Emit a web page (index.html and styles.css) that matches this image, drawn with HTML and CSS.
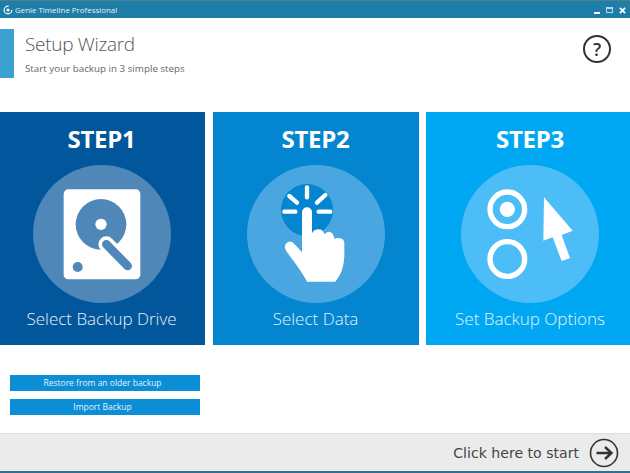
FILE: index.html
```html
<!DOCTYPE html>
<html>
<head>
    <meta charset="UTF-8">
    <title>Genie Timeline Professional</title>
    <link rel="stylesheet" href="styles.css">
</head>
<body>
    <div class="window">
        <div class="titlebar">
            <svg class="app-icon" viewBox="0 0 12 12">
                <circle cx="6" cy="6" r="4.6" fill="none" stroke="#fff" stroke-width="1.4" stroke-dasharray="22 6"/>
                <circle cx="6" cy="6" r="1.8" fill="#fff"/>
            </svg>
            <span class="app-name">Genie Timeline Professional</span>
            <div class="win-buttons">
                <span class="win-min"></span>
                <span class="win-max"></span>
                <svg class="win-close" viewBox="0 0 8 8"><path d="M1 1L7 7M7 1L1 7" stroke="#fff" stroke-width="2"/></svg>
            </div>
        </div>

        <header class="head">
            <div class="accent"></div>
            <div class="head-text">
                <h1>Setup Wizard</h1>
                <p>Start your backup in 3 simple steps</p>
            </div>
            <div class="help">?</div>
        </header>

        <div class="steps">
            <div class="step step1">
                <h2>STEP1</h2>
                <svg class="step-icon" viewBox="0 0 414 414">
                    <circle cx="207" cy="207" r="207" fill="#4f87b8"/>
                    <rect x="92" y="73" width="230" height="270" rx="14" fill="#fff"/>
                    <circle cx="204" cy="178" r="76" fill="#4f87b8"/>
                    <circle cx="204" cy="178" r="17" fill="#fff"/>
                    <circle cx="134" cy="306" r="15" fill="#4f87b8"/>
                    <path d="M220 238L284 303" stroke="#fff" stroke-width="48" stroke-linecap="round"/>
                    <path d="M220 238L284 303" stroke="#4f87b8" stroke-width="26" stroke-linecap="round"/>
                </svg>
                <div class="step-label">Select Backup Drive</div>
            </div>
            <div class="step step2">
                <h2>STEP2</h2>
                <svg class="step-icon" viewBox="0 0 414 414">
                    <circle cx="207" cy="207" r="207" fill="#4aa6e0"/>
                    <circle cx="180" cy="135" r="78" fill="#0385d0"/>
                    <path d="M180 67V97M127 93L150 113M235 90L210 113M112 140H145M215 140H250" stroke="#fff" stroke-width="13" stroke-linecap="round"/>
                    <path d="M165 142A15 15 0 0 1 195 142V205Q200 193 215 193Q228 193 232 208Q238 200 246 200Q258 200 263 222Q268 218 278 220Q292 222 292 235V275Q290 320 265 350H180Q165 320 120 262Q108 245 118 235Q130 222 145 240L165 262Z" fill="#fff"/>
                </svg>
                <div class="step-label">Select Data</div>
            </div>
            <div class="step step3">
                <h2>STEP3</h2>
                <svg class="step-icon" viewBox="0 0 414 414">
                    <circle cx="207" cy="207" r="207" fill="#4dbdf7"/>
                    <circle cx="139" cy="133" r="52" fill="none" stroke="#fff" stroke-width="16"/>
                    <circle cx="139" cy="133" r="23" fill="#fff"/>
                    <circle cx="139" cy="282" r="52" fill="none" stroke="#fff" stroke-width="16"/>
                    <path d="M249 97L335 197L302 210L327 280L302 288L275 217L247 227Z" fill="#fff"/>
                </svg>
                <div class="step-label">Set Backup Options</div>
            </div>
        </div>

        <div class="actions">
            <a href="#" class="action">Restore from an older backup</a>
            <a href="#" class="action">Import Backup</a>
        </div>

        <footer class="foot">
            <span class="start-text">Click here to start</span>
            <svg class="start-icon" viewBox="0 0 30 30">
                <circle cx="15" cy="15" r="13.5" fill="none" stroke="#333" stroke-width="1.6"/>
                <path d="M7.5 15H22M16 9L22.5 15L16 21" fill="none" stroke="#333" stroke-width="2.4"/>
            </svg>
        </footer>
    </div>
</body>
</html>
```

FILE: styles.css
```css
* {
    margin: 0;
    padding: 0;
    box-sizing: border-box;
}

body {
    background-color: #fff;
    font-family: 'Open Sans', sans-serif;
}

.window {
    width: 630px;
    height: 473px;
    display: flex;
    flex-direction: column;
    overflow: hidden;
}

.titlebar {
    height: 18px;
    flex: none;
    display: flex;
    align-items: center;
    padding: 1px 4px 0 3px;
    background-color: #1e7ea8;
    border-top: 1px solid #4f7f92;
    color: #e6f1f6;
}

.app-icon {
    width: 10px;
    height: 10px;
    margin-right: 2px;
}

.app-name {
    font-size: 7.9px;
    line-height: 12px;
}

.win-buttons {
    margin-left: auto;
    display: flex;
    align-items: center;
    gap: 6px;
}

.win-min {
    width: 6px;
    height: 2px;
    margin-top: 5px;
    background-color: #fff;
}

.win-max {
    width: 7px;
    height: 6px;
    border: 1px solid #b9d8e6;
    border-top-width: 2px;
}

.win-close {
    width: 7px;
    height: 7px;
}

.head {
    height: 94px;
    flex: none;
    display: flex;
    align-items: flex-start;
    padding-top: 11px;
}

.accent {
    width: 14px;
    height: 49px;
    background-color: #3ba1d0;
}

.head-text {
    margin-left: 11px;
    padding-top: 2px;
    color: #555;
}

.head-text h1 {
    font-size: 19px;
    font-weight: 300;
    line-height: 26px;
    letter-spacing: -0.3px;
}

.head-text p {
    font-size: 9.8px;
    line-height: 14px;
    margin-top: 5px;
    color: #666;
}

.help {
    width: 28px;
    height: 28px;
    margin-left: auto;
    margin-right: 19px;
    margin-top: 6px;
    border: 2px solid #333;
    border-radius: 50%;
    text-align: center;
    font-size: 18px;
    font-weight: 600;
    line-height: 24px;
    color: #333;
}

.steps {
    height: 233px;
    flex: none;
    display: flex;
    justify-content: space-between;
}

.step {
    width: 205px;
    display: flex;
    flex-direction: column;
    align-items: center;
}

.step1 { background-color: #02569b; padding-right: 2px; }
.step2 { background-color: #0385d0; width: 206px; }
.step3 { background-color: #00a8f3; width: 204px; padding-left: 4px; }

.step h2 {
    margin-top: 10px;
    font-size: 24px;
    font-weight: 700;
    line-height: 33px;
    letter-spacing: -0.3px;
    color: #fff;
}

.step-icon {
    width: 138px;
    height: 138px;
    margin-top: 10px;
}

.step-label {
    margin-top: 4px;
    font-size: 17px;
    font-weight: 300;
    line-height: 24px;
    color: #e4f1fa;
}

.actions {
    flex: none;
    display: flex;
    flex-direction: column;
    gap: 8px;
    padding: 30px 0 0 10px;
    height: 88px;
}

.action {
    width: 190px;
    height: 16px;
    padding-right: 5px;
    background-color: #0b8ed6;
    color: #e4f2fa;
    font-size: 8.5px;
    line-height: 16px;
    text-align: center;
    text-decoration: none;
}

.foot {
    height: 40px;
    flex: none;
    display: flex;
    align-items: center;
    justify-content: flex-end;
    padding-right: 11px;
    background-color: #ebebeb;
    border-top: 1px solid #dedede;
    border-bottom: 2px solid #2b7396;
}

.start-text {
    font-family: 'DejaVu Sans', sans-serif;
    font-size: 14.1px;
    color: #444;
}

.start-icon {
    width: 30px;
    height: 30px;
    margin-left: 10px;
}
```
